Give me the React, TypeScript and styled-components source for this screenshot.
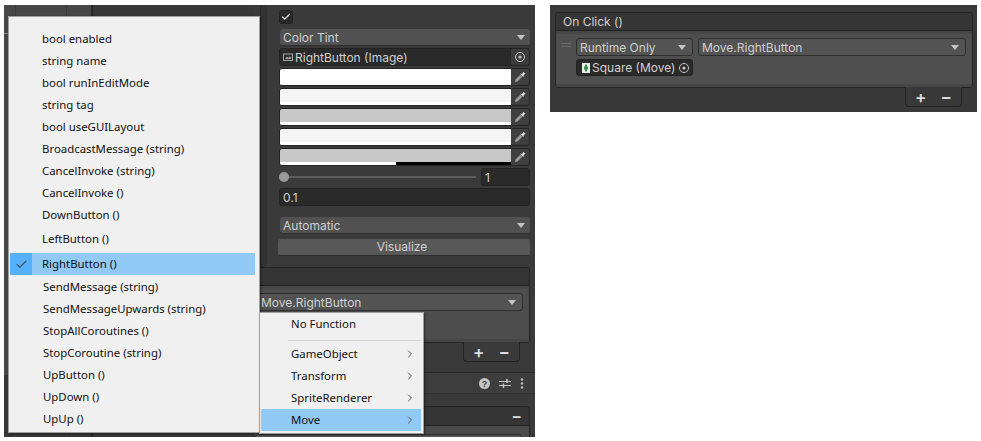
import React from 'react';
import styled, { createGlobalStyle } from 'styled-components';
import { Check, ChevronRight } from 'lucide-react';

const GlobalStyle = createGlobalStyle`
    html, body {
        margin: 0;
        background: white;
    }

    * {
        box-sizing: border-box;
    }
`;

const Page = styled.div`
    width: 981px;
    height: 441px;
    overflow: hidden;
    position: relative;
    display: flex;
    align-items: flex-start;
    gap: 15px;
    padding: 5px 4px 0;
`;

const EditorShot = styled.div`
    width: 531px;
    height: 432px;
    flex: none;
    display: flex;
    overflow: hidden;
    background: #3a3a3a;
    color: #d0d0d0;
    font-size: 12px;
    font-family: 'Inter', 'Liberation Sans', sans-serif;
`;

const SceneView = styled.div`
    width: 89px;
    flex: none;
    border-right: 2px solid #262626;
    background:
        linear-gradient(#8a8a8a, #8a8a8a) 0 28px / 100% 1px no-repeat,
        linear-gradient(#3d3d3d, #3d3d3d) 11px 0 / 1px 100% no-repeat,
        linear-gradient(#3d3d3d, #3d3d3d) 62px 0 / 1px 100% no-repeat,
        linear-gradient(#474747 0 370px, #383838 370px);
`;

const Hierarchy = styled.div`
    width: 162px;
    flex: none;
    background: #383838;
`;

const Inspector = styled.div`
    flex: 1;
    padding: 5px 5px 0 0;
    display: flex;
    flex-direction: column;
    min-width: 0;
    background: linear-gradient(
        90deg,
        #3a3a3a 5px,
        #2a2a2a 5px 6px,
        #333333 6px 12px,
        #3a3a3a 12px
    );
`;

const Controls = styled.div`
    padding-left: 24px;
    display: flex;
    flex-direction: column;
    gap: 2px;
`;

const Checkbox = styled.div`
    width: 14px;
    height: 14px;
    margin-bottom: 3px;
    border: 1px solid #232323;
    border-radius: 3px;
    background: #2a2a2a;
    display: flex;
    align-items: center;
    justify-content: center;
    color: #e8e8e8;
`;

const Dropdown = styled.div<{ $mt?: number }>`
    height: 17px;
    margin: ${(p) => p.$mt ?? 0}px 0 0 1px;
    border-bottom: 1px solid #2e2e2e;
    border-radius: 3px;
    background: #515151;
    display: flex;
    align-items: center;
    justify-content: space-between;
    padding: 0 5px 0 3px;
`;

const Caret = styled.span`
    width: 0;
    height: 0;
    flex: none;
    border-left: 4px solid transparent;
    border-right: 4px solid transparent;
    border-top: 5px solid #c4c4c4;
`;

const ObjectField = styled.div`
    height: 18px;
    border: 1px solid #232323;
    border-radius: 3px;
    background: #2a2a2a;
    display: flex;
    align-items: center;
    overflow: hidden;
`;

const ObjectName = styled.span`
    flex: 1;
    display: flex;
    align-items: center;
    gap: 2px;
    padding-left: 3px;
`;

const PickerCell = styled.span`
    width: 18px;
    height: 100%;
    flex: none;
    background: #3c3c3c;
    display: flex;
    align-items: center;
    justify-content: center;
`;

const ColorRow = styled.div`
    height: 18px;
    display: flex;
    border: 1px solid #232323;
    border-radius: 3px;
    overflow: hidden;
`;

const ColorSwatch = styled.div<{ $color: string; $alpha: string }>`
    flex: 1;
    background: ${(p) => p.$color};
    border-bottom: 3px solid ${(p) => p.$alpha};
    position: relative;
`;

const AlphaFill = styled.div`
    position: absolute;
    left: 0;
    bottom: -3px;
    width: 116px;
    height: 3px;
    background: #ffffff;
`;

const EyeCell = styled.div`
    width: 18px;
    flex: none;
    background: #3f3f3f;
    display: flex;
    align-items: center;
    justify-content: center;
`;

const SliderRow = styled.div`
    height: 18px;
    display: flex;
    align-items: center;
    gap: 5px;
`;

const SliderTrack = styled.div`
    flex: 1;
    height: 2px;
    background: #5e5e5e;
    position: relative;
`;

const SliderThumb = styled.span`
    position: absolute;
    left: 0;
    top: -4px;
    width: 10px;
    height: 10px;
    border-radius: 50%;
    background: #999999;
`;

const NumberField = styled.div<{ $w?: number }>`
    height: 18px;
    width: ${(p) => (p.$w ? `${p.$w}px` : 'auto')};
    flex: none;
    border: 1px solid #232323;
    border-radius: 3px;
    background: #2a2a2a;
    display: flex;
    align-items: center;
    padding-left: 3px;
`;

const WideButton = styled.div`
    margin: 3px 0 0 -1px;
    height: 17px;
    padding-right: 4px;
    border-bottom: 1px solid #2e2e2e;
    border-radius: 3px;
    background: #585858;
    text-align: center;
    line-height: 16px;
`;

const EventBox = styled.div`
    margin-top: 11px;
    border: 1px solid #232323;
    border-left: none;
    border-radius: 0 3px 3px 0;
`;

const EventHeader = styled.div`
    height: 18px;
    background: #353535;
    border-bottom: 1px solid #232323;
`;

const EventBody = styled.div`
    height: 56px;
    padding: 4px 6px 0 2px;
    background: #4d4d4d;
    border-top: 3px solid #464646;
    border-bottom: 3px solid #464646;
`;

const MiniDropdown = styled.div<{ $grow?: boolean }>`
    height: 18px;
    flex: ${(p) => (p.$grow ? 1 : 'none')};
    border: 1px solid #2e2e2e;
    border-radius: 3px;
    background: #535353;
    display: flex;
    align-items: center;
    justify-content: space-between;
    padding: 0 6px 0 3px;
    white-space: nowrap;
`;

const ToolTab = styled.div`
    align-self: flex-end;
    width: 57px;
    height: 20px;
    margin: -1px 10px 0 0;
    border: 1px solid #232323;
    border-top-color: #3a3a3a;
    border-radius: 0 0 4px 4px;
    display: flex;
    align-items: center;
    justify-content: center;
    gap: 14px;
    color: #dcdcdc;
    font-size: 17px;
    font-weight: 600;
`;

const Toolbar = styled.div`
    margin: 10px -5px 0 0;
    height: 22px;
    flex: none;
    border-top: 1px solid #262626;
    border-bottom: 1px solid #333333;
    background: #3d3d3d;
    display: flex;
    align-items: center;
    justify-content: flex-end;
    gap: 9px;
    padding-right: 11px;
`;

const ComponentHeader = styled.div`
    margin-top: 12px;
    height: 20px;
    flex: none;
    border: 1px solid #232323;
    border-left: none;
    border-radius: 0 3px 0 0;
    background: #353535;
    display: flex;
    align-items: center;
    justify-content: flex-end;
    padding-right: 7px;
    font-size: 16px;
    font-weight: 600;
    color: #dcdcdc;
`;

const ComponentBody = styled.div`
    flex: 1;
    padding: 8px 7px 0 0;
    background: #4a4a4a;
    border-right: 1px solid #232323;
`;

const ComponentField = styled.div`
    height: 18px;
    border: 1px solid #2e2e2e;
    border-radius: 3px;
    background: #535353;
`;

const ShotPanel = styled.div`
    width: 427px;
    height: 107px;
    flex: none;
    background: #383838;
    padding: 7px 4px 0 5px;
    color: #d0d0d0;
    font-size: 12px;
    font-family: 'Inter', 'Liberation Sans', sans-serif;
    display: flex;
    flex-direction: column;
`;

const OnClickBox = styled.div`
    border: 1px solid #232323;
    border-radius: 3px;
    overflow: hidden;
`;

const OnClickHeader = styled.div`
    height: 18px;
    background: #353535;
    border-bottom: 1px solid #232323;
    padding-left: 7px;
    line-height: 17px;
`;

const OnClickBody = styled.div`
    height: 56px;
    background: #4f4f4f;
    border-top: 3px solid #464646;
    border-bottom: 3px solid #464646;
    padding: 4px 6px 0 5px;
    display: flex;
    gap: 5px;
`;

const Handle = styled.div`
    width: 10px;
    height: 4px;
    margin-top: 5px;
    border-top: 1px solid #6c6c6c;
    border-bottom: 1px solid #6c6c6c;
    flex: none;
`;

const CallColumn = styled.div`
    width: 117px;
    flex: none;
    display: flex;
    flex-direction: column;
    gap: 3px;
`;

const SquareField = styled.div`
    height: 17px;
    background: #2a2a2a;
    border: 1px solid #232323;
    border-radius: 3px;
    display: flex;
    align-items: center;
    white-space: nowrap;
    padding-left: 5px;
    gap: 2px;
`;

const PanelTab = styled(ToolTab)`
    margin-right: 11px;
    border-top-color: #383838;
`;

const Menu = styled.div<{ $left: number; $top: number; $w: number; $pt: number; $pr: number }>`
    position: absolute;
    left: ${(p) => p.$left}px;
    top: ${(p) => p.$top}px;
    width: ${(p) => p.$w}px;
    background: #f0f0f0;
    border: 1px solid #a0a0a0;
    box-shadow: 1px 1px 2px rgba(0, 0, 0, 0.45);
    padding: ${(p) => p.$pt}px ${(p) => p.$pr}px 2px 1px;
    color: #101010;
    font-family: 'Noto Sans', 'Open Sans', sans-serif;
    font-size: 11.4px;
`;

const MenuItem = styled.div<{ $mt?: number; $pl: number; $active?: boolean }>`
    height: 22px;
    margin-top: ${(p) => p.$mt ?? 0}px;
    display: flex;
    align-items: center;
    position: relative;
    padding: 0 5px 1px ${(p) => p.$pl}px;
    justify-content: space-between;
    background: ${(p) => (p.$active ? '#91c9f7' : 'transparent')};
`;

const CheckMark = styled.span`
    position: absolute;
    left: 0;
    top: 0;
    bottom: 0;
    width: 22px;
    background: #56b0fa;
    display: flex;
    align-items: center;
    justify-content: center;
    color: #3c5a78;
`;

const MenuRule = styled.div`
    height: 1px;
    background: #d7d7d7;
    margin: 5px 0 2px 27px;
`;

const Eyedropper = () => (
    <svg width="12" height="12" viewBox="0 0 12 12">
        <path d="M1 11 L1.5 8.5 L6.5 3.5 L8.5 5.5 L3.5 10.5 Z" fill="#9a9a9a" />
        <path d="M6 2.5 L8 3 L9.5 1 L11.5 2.5 L9.5 4.5 L9.5 6 Z" fill="#e4e4e4" />
    </svg>
);

const TargetIcon = () => (
    <svg width="12" height="12" viewBox="0 0 12 12">
        <circle cx="6" cy="6" r="4.5" fill="none" stroke="#c8c8c8" strokeWidth="1" />
        <circle cx="6" cy="6" r="1.6" fill="#c8c8c8" />
    </svg>
);

const ImageIcon = () => (
    <svg width="10" height="10" viewBox="0 0 10 10">
        <rect x="0.5" y="2" width="9" height="6.5" fill="none" stroke="#a8a8a8" />
        <path d="M2 7 L4 4.5 L5.5 6 L7 4 L8.5 7 Z" fill="#a8a8a8" />
    </svg>
);

const ScriptIcon = () => (
    <svg width="8" height="10" viewBox="0 0 8 10">
        <rect width="8" height="10" fill="#e8efe8" />
        <path d="M3 1.5H5V3.5H6V6.5H5V8.5H3V6.5H2V3.5H3Z" fill="#3d8d50" />
    </svg>
);

const HelpIcon = () => (
    <svg width="11" height="11" viewBox="0 0 11 11">
        <circle cx="5.5" cy="5.5" r="5.5" fill="#c4c4c4" />
        <text x="5.5" y="8.8" textAnchor="middle" fontSize="9" fontWeight="700" fill="#3c3c3c" fontFamily="Liberation Sans">?</text>
    </svg>
);

const PresetIcon = () => (
    <svg width="12" height="11" viewBox="0 0 12 11">
        <path d="M0 3.5H12M0 7.5H12" stroke="#c4c4c4" strokeWidth="1" />
        <path d="M8 1V5M4.5 5.5V10" stroke="#c4c4c4" strokeWidth="1.6" />
    </svg>
);

const MoreIcon = () => (
    <svg width="4" height="11" viewBox="0 0 4 11">
        <circle cx="2" cy="1.5" r="1.2" fill="#c4c4c4" />
        <circle cx="2" cy="5.5" r="1.2" fill="#c4c4c4" />
        <circle cx="2" cy="9.5" r="1.2" fill="#c4c4c4" />
    </svg>
);

const colorRows = [
    { color: '#ffffff', alpha: '#ffffff' },
    { color: '#f5f5f5', alpha: '#ffffff' },
    { color: '#c8c8c8', alpha: '#ffffff' },
    { color: '#f5f5f5', alpha: '#ffffff' },
    { color: '#c8c8c8', alpha: '#000000' },
];

const methods = [
    { name: 'bool enabled' },
    { name: 'string name' },
    { name: 'bool runInEditMode' },
    { name: 'string tag' },
    { name: 'bool useGUILayout' },
    { name: 'BroadcastMessage (string)' },
    { name: 'CancelInvoke (string)' },
    { name: 'CancelInvoke ()' },
    { name: 'DownButton ()' },
    { name: 'LeftButton ()', mt: 2 },
    { name: 'RightButton ()', mt: 3, active: true },
    { name: 'SendMessage (string)', mt: 1, pl: 33 },
    { name: 'SendMessageUpwards (string)', pl: 33 },
    { name: 'StopAllCoroutines ()', pl: 33 },
    { name: 'StopCoroutine (string)', pl: 33 },
    { name: 'UpButton ()', pl: 33 },
    { name: 'UpDown ()', pl: 33 },
    { name: 'UpUp ()', pl: 33 },
];

const components = ['GameObject', 'Transform', 'SpriteRenderer', 'Move'];

const App = () => (
    <Page>
        <GlobalStyle />
        <EditorShot>
            <SceneView />
            <Hierarchy />
            <Inspector>
                <Controls>
                    <Checkbox>
                        <Check size={10} strokeWidth={3} />
                    </Checkbox>
                    <Dropdown>
                        Color Tint <Caret />
                    </Dropdown>
                    <ObjectField>
                        <ObjectName>
                            <ImageIcon /> RightButton (Image)
                        </ObjectName>
                        <PickerCell>
                            <TargetIcon />
                        </PickerCell>
                    </ObjectField>
                    {colorRows.map((row, index) => (
                        <ColorRow key={index}>
                            <ColorSwatch $color={row.color} $alpha={row.alpha}>
                                {index === 4 && <AlphaFill />}
                            </ColorSwatch>
                            <EyeCell>
                                <Eyedropper />
                            </EyeCell>
                        </ColorRow>
                    ))}
                    <SliderRow>
                        <SliderTrack>
                            <SliderThumb />
                        </SliderTrack>
                        <NumberField $w={49}>1</NumberField>
                    </SliderRow>
                    <NumberField>0.1</NumberField>
                    <Dropdown $mt={9}>
                        Automatic <Caret />
                    </Dropdown>
                    <WideButton>Visualize</WideButton>
                </Controls>
                <EventBox>
                    <EventHeader />
                    <EventBody>
                        <MiniDropdown>
                            Move.RightButton <Caret />
                        </MiniDropdown>
                    </EventBody>
                </EventBox>
                <ToolTab>
                    <span>+</span>
                    <span>−</span>
                </ToolTab>
                <Toolbar>
                    <HelpIcon />
                    <PresetIcon />
                    <MoreIcon />
                </Toolbar>
                <ComponentHeader>−</ComponentHeader>
                <ComponentBody>
                    <ComponentField />
                </ComponentBody>
            </Inspector>
        </EditorShot>
        <ShotPanel>
            <OnClickBox>
                <OnClickHeader>On Click ()</OnClickHeader>
                <OnClickBody>
                    <Handle />
                    <CallColumn>
                        <MiniDropdown>
                            Runtime Only <Caret />
                        </MiniDropdown>
                        <SquareField>
                            <ScriptIcon /> Square (Move) <TargetIcon />
                        </SquareField>
                    </CallColumn>
                    <MiniDropdown $grow>
                        Move.RightButton <Caret />
                    </MiniDropdown>
                </OnClickBody>
            </OnClickBox>
            <PanelTab>
                <span>+</span>
                <span>−</span>
            </PanelTab>
        </ShotPanel>
        <Menu $left={8} $top={16} $w={252} $pt={11} $pr={4}>
            {methods.map((item) => (
                <MenuItem
                    key={item.name}
                    $mt={item.mt}
                    $pl={item.pl ?? 32}
                    $active={item.active}
                >
                    {item.name}
                    {item.active && (
                        <CheckMark>
                            <Check size={13} strokeWidth={2.5} />
                        </CheckMark>
                    )}
                </MenuItem>
            ))}
        </Menu>
        <Menu $left={259} $top={312} $w={165} $pt={0} $pr={2}>
            <MenuItem $pl={30}>No Function</MenuItem>
            <MenuRule />
            {components.map((name) => (
                <MenuItem key={name} $pl={30} $active={name === 'Move'}>
                    {name}
                    <ChevronRight size={12} color="#555555" />
                </MenuItem>
            ))}
        </Menu>
    </Page>
);

export default App;
